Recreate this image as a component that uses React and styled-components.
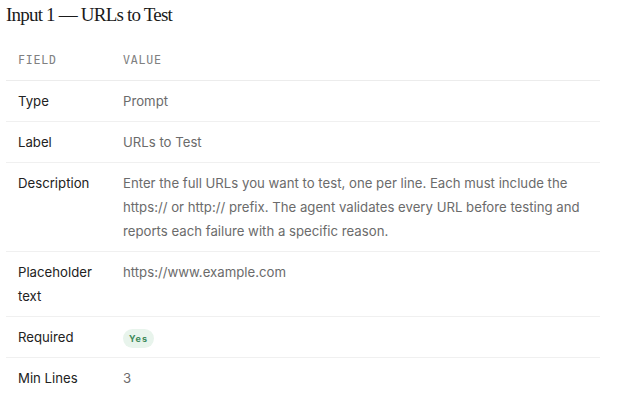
import React from "react"
import styled, { createGlobalStyle } from "styled-components"

const Global = createGlobalStyle`
  body {
    margin: 0;
    background: #fff;
    font-family: Inter, "Noto Sans", sans-serif;
  }
`

const Page = styled.div`
  width: 594px;
  padding: 4px 0 0 6px;
`

const Title = styled.h2`
  margin: 0;
  height: 36px;
  font-family: "Liberation Serif", serif;
  font-weight: 400;
  font-size: 19px;
  line-height: 22px;
  letter-spacing: -0.8px;
  color: #1a1a1a;
`

const Table = styled.table`
  width: 100%;
  border-collapse: collapse;
`

const Th = styled.th`
  text-align: left;
  padding: 8px 12px;
  height: 24px;
  font-family: "DejaVu Sans Mono", monospace;
  font-size: 11.5px;
  font-weight: 400;
  letter-spacing: 0.8px;
  color: #808080;
  border-bottom: 1px solid #ececec;
  width: ${(p) => (p.$narrow ? "81px" : "auto")};
`

const Td = styled.td`
  vertical-align: top;
  padding: 8px 12px;
  font-size: 13.2px;
  line-height: 24px;
  color: ${(p) => (p.$field ? "#222" : "#6b6b6b")};
  border-bottom: ${(p) => (p.$last ? "none" : "1px solid #f0f0f0")};
`

const Badge = styled.span`
  display: inline-block;
  padding: 0 6px;
  line-height: 19px;
  border-radius: 10px;
  background: #e8f4ec;
  color: #3e8a5a;
  font-size: 9px;
  font-weight: 700;
  letter-spacing: 1px;
  vertical-align: middle;
`

const rows = [
  ["Type", "Prompt"],
  ["Label", "URLs to Test"],
  [
    "Description",
    "Enter the full URLs you want to test, one per line. Each must include the https:// or http:// prefix. The agent validates every URL before testing and reports each failure with a specific reason.",
  ],
  ["Placeholder text", "https://www.example.com"],
  ["Required", <Badge>Yes</Badge>],
  ["Min Lines", "3"],
]

export default function App() {
  return (
    <Page>
      <Global />
      <Title>Input 1 — URLs to Test</Title>
      <Table>
        <thead>
          <tr>
            <Th $narrow>FIELD</Th>
            <Th>VALUE</Th>
          </tr>
        </thead>
        <tbody>
          {rows.map(([f, v], i) => (
            <tr key={f}>
              <Td $field $last={i === rows.length - 1}>{f}</Td>
              <Td $last={i === rows.length - 1}>{v}</Td>
            </tr>
          ))}
        </tbody>
      </Table>
    </Page>
  )
}
